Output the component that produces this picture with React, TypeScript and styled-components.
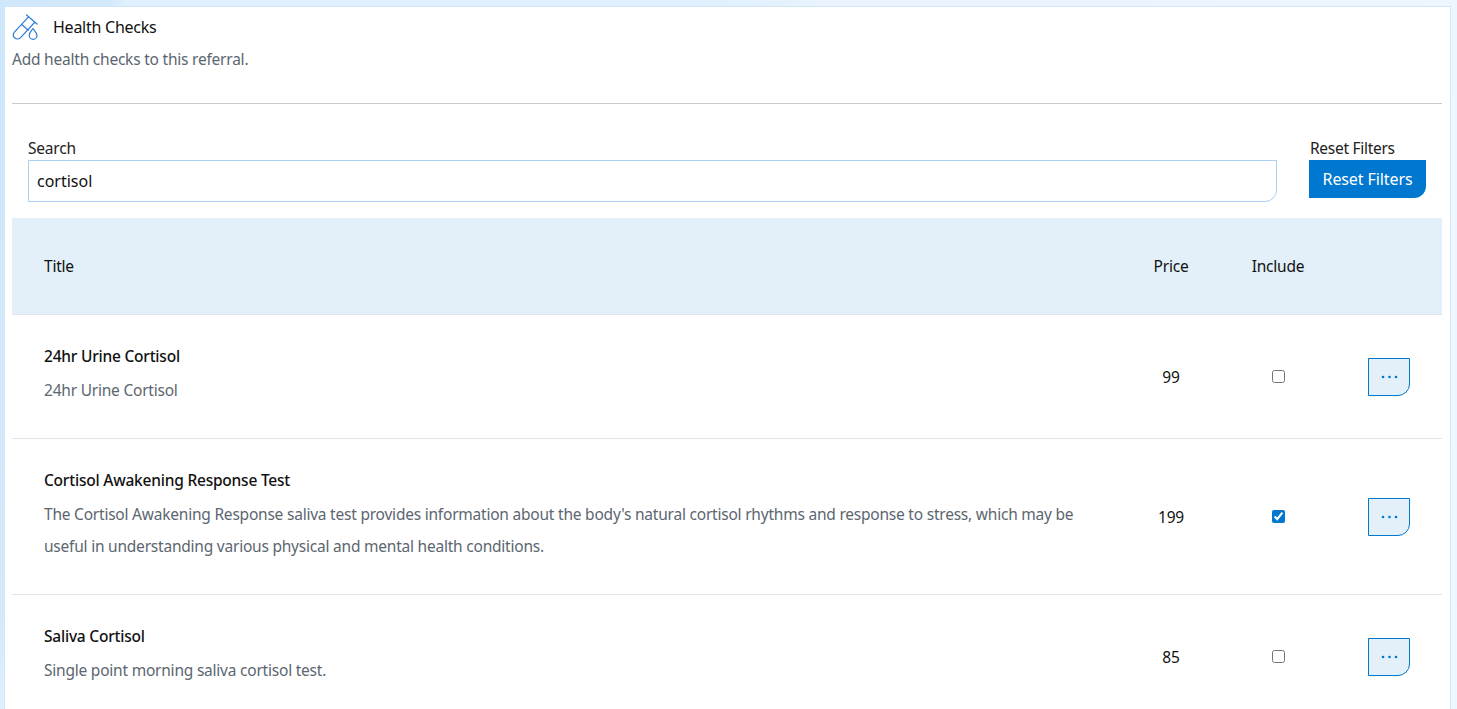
import { createGlobalStyle } from 'styled-components';
import styled from 'styled-components';

const GlobalStyle = createGlobalStyle`
  html, body {
    margin: 0;
    height: 100%;
    overflow: hidden;
    background: linear-gradient(100deg, #cfe7fb 0, #d3e9fc 7%, #dff0fe 8%, #dff0fe 44%, #eaf4fe 54%, #eef6ff 100%);
    font-family: 'Noto Sans', 'Open Sans', sans-serif;
    font-size: 15.5px;
    letter-spacing: -0.22px;
  }
`;

const Page = styled.div`
  height: 709px;
  padding: 6px 6px 0 4px;
  box-sizing: border-box;
  overflow: hidden;
`;

const Panel = styled.main`
  background: #fff;
  border: 1px solid #d3e6f7;
  border-bottom: 0;
  padding: 6px 8px 0 7px;
  height: 703px;
  box-sizing: border-box;
`;

const Header = styled.header`
  height: 90px;
  border-bottom: 1px solid #c8ccd0;
`;

const TitleRow = styled.div`
  display: flex;
  align-items: center;
  gap: 13px;
  height: 28px;
`;

const Title = styled.h2`
  margin: 0;
  font-size: 16px;
  font-weight: 400;
  letter-spacing: -0.25px;
  color: #111;
`;

const Subtitle = styled.p`
  margin: 8px 0 0;
  line-height: 20px;
  color: #5c6670;
`;

const Filters = styled.div`
  display: flex;
  align-items: flex-start;
  gap: 32px;
  padding: 34px 16px 16px;
`;

const SearchField = styled.label`
  flex: 1;
  display: flex;
  flex-direction: column;
`;

const FieldLabel = styled.span`
  line-height: 20px;
  margin-bottom: 2px;
  color: #222;
`;

const SearchInput = styled.input`
  height: 42px;
  box-sizing: border-box;
  border: 1px solid #a9d0f0;
  border-radius: 0 0 12px 0;
  padding: 0 8px;
  font: inherit;
  font-size: 16px;
  letter-spacing: 0;
  color: #111;
  outline: none;
`;

const ResetField = styled.div`
  display: flex;
  flex-direction: column;
  width: 117px;
`;

const ResetLabel = styled(FieldLabel)`
  padding-left: 1px;
  letter-spacing: -0.28px;
`;

const ResetButton = styled.button`
  height: 38px;
  border: 0;
  border-radius: 0 0 12px 0;
  background: #0078d0;
  color: #fff;
  font: inherit;
  font-size: 16px;
  letter-spacing: -0.1px;
  padding: 0;
`;

const Row = styled.div<{ $head?: boolean; $height: number }>`
  display: grid;
  grid-template-columns: 1fr 98px 116px 106px;
  align-items: center;
  height: ${(p) => p.$height}px;
  box-sizing: border-box;
  background: ${(p) => (p.$head ? '#e3eff9' : '#fff')};
  border-bottom: 1px solid #e2e4ec;
  color: #111;
`;

const TitleCell = styled.div`
  padding: 0 32px;
`;

const ItemCell = styled(TitleCell)`
  padding-bottom: 1px;
`;

const CenterCell = styled.div`
  display: flex;
  justify-content: center;
`;

const ItemName = styled.div`
  font-weight: 500;
  line-height: 20px;
  color: #111;
`;

const ItemDescription = styled.div`
  margin-top: 8px;
  line-height: 32px;
  color: #5c6670;
`;

const Check = styled.input`
  width: 13px;
  height: 13px;
  margin: 0;
  accent-color: #0078d0;
`;

const MoreButton = styled.button`
  display: flex;
  align-items: center;
  justify-content: center;
  width: 42px;
  height: 38px;
  box-sizing: border-box;
  border: 1px solid #0078d0;
  border-radius: 0 0 12px 0;
  background: #e3eff9;
  padding: 0;
`;

const TubeIcon = () => (
  <svg width="28" height="28" viewBox="0 0 28 28" fill="none" stroke="#2f7bd8" strokeWidth="1.2">
    <path d="M14.5 2 L25 11" strokeLinecap="round" />
    <path
      d="M16.5 3.8 L2.4 19.2 C0.6 21.2 1 23.6 2.8 25 C4.6 26.5 7.2 26.2 8.8 24.4 L23 9"
      strokeLinejoin="round"
    />
    <path d="M9.5 11.3 L16.6 17.5" />
    <path
      d="M21 15.5 C19.6 17.6 17.2 19.6 17.2 22.4 A3.9 3.9 0 0 0 25 22.4 C25 19.6 22.4 17.6 21 15.5 Z"
      strokeLinejoin="round"
    />
  </svg>
);

const DotsIcon = () => (
  <svg width="17" height="4" viewBox="0 0 17 4" fill="#0078d0">
    <circle cx="2" cy="2" r="1.3" />
    <circle cx="8.5" cy="2" r="1.3" />
    <circle cx="15" cy="2" r="1.3" />
  </svg>
);

const tests = [
  {
    name: '24hr Urine Cortisol',
    description: '24hr Urine Cortisol',
    price: 99,
    included: false,
    height: 124,
  },
  {
    name: 'Cortisol Awakening Response Test',
    description:
      "The Cortisol Awakening Response saliva test provides information about the body's natural cortisol rhythms and response to stress, which may be useful in understanding various physical and mental health conditions.",
    price: 199,
    included: true,
    height: 156,
  },
  {
    name: 'Saliva Cortisol',
    description: 'Single point morning saliva cortisol test.',
    price: 85,
    included: false,
    height: 124,
  },
];

const App = () => {
  return (
    <>
      <GlobalStyle />
      <Page>
        <Panel>
          <Header>
            <TitleRow>
              <TubeIcon />
              <Title>Health Checks</Title>
            </TitleRow>
            <Subtitle>Add health checks to this referral.</Subtitle>
          </Header>
          <Filters>
            <SearchField>
              <FieldLabel>Search</FieldLabel>
              <SearchInput defaultValue="cortisol" />
            </SearchField>
            <ResetField>
              <ResetLabel>Reset Filters</ResetLabel>
              <ResetButton>Reset Filters</ResetButton>
            </ResetField>
          </Filters>
          <Row $head $height={97}>
            <TitleCell>Title</TitleCell>
            <CenterCell>Price</CenterCell>
            <CenterCell>Include</CenterCell>
            <div />
          </Row>
          {tests.map((test) => (
            <Row key={test.name} $height={test.height}>
              <ItemCell>
                <ItemName>{test.name}</ItemName>
                <ItemDescription>{test.description}</ItemDescription>
              </ItemCell>
              <CenterCell>{test.price}</CenterCell>
              <CenterCell>
                <Check type="checkbox" defaultChecked={test.included} />
              </CenterCell>
              <CenterCell>
                <MoreButton>
                  <DotsIcon />
                </MoreButton>
              </CenterCell>
            </Row>
          ))}
        </Panel>
      </Page>
    </>
  );
};

export default App;
